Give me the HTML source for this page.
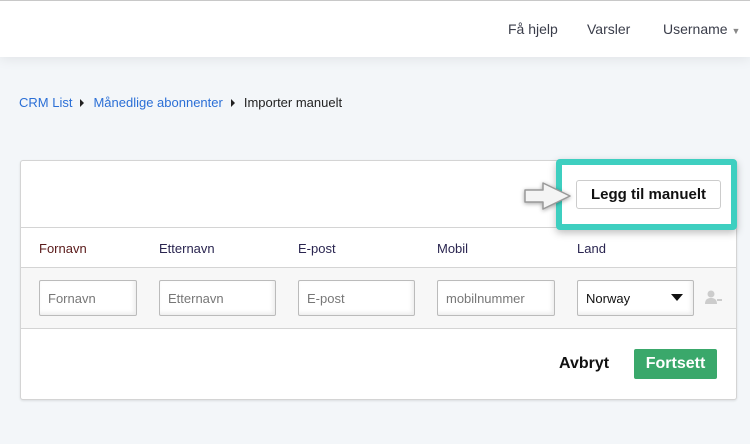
<!DOCTYPE html>
<html><head><meta charset="utf-8"><style>
*{box-sizing:border-box;margin:0;padding:0}
body{width:750px;height:444px;background:#f3f6f9;font-family:"Liberation Sans",sans-serif;position:relative;overflow:hidden}
.top{position:absolute;left:0;top:0;width:750px;height:57px;background:#fff;border-top:1px solid #c8c8c8;box-shadow:0 2px 12px rgba(0,0,0,.08)}
.nav{position:absolute;top:21px;font-size:14px;color:#3a3d4a}
.bc{position:absolute;top:95px;left:19px;font-size:13px;color:#2b6fd6}
.bc span.t{color:#222}
.tri{display:inline-block;width:0;height:0;border-left:4px solid #222;border-top:4px solid transparent;border-bottom:4px solid transparent;margin:0 9px 0 8px}
.card{position:absolute;left:20px;top:160px;width:717px;height:240px;background:#fff;border:1px solid #d4d4d4;border-radius:3px;box-shadow:0 1px 2px rgba(0,0,0,.1)}
.hr{position:absolute;left:0;width:715px;border-top:1px solid #d4d4d4}
.row{position:absolute;left:0;top:107px;width:715px;height:61px;background:#f7f7f7}
.lbl{position:absolute;top:80px;font-size:13px;color:#2a2550}
.inp{position:absolute;top:119px;height:36px;border:1px solid #bbb;border-radius:2px;background:#fff;box-shadow:inset -2px -2px 4px rgba(0,0,0,.08);font-size:13px;color:#777;padding:10px 8px}
.hl{position:absolute;left:556px;top:159px;width:181px;height:71px;border:6px solid #3ecfc0;border-radius:4px;background:#fff;box-shadow:0 3px 8px rgba(0,0,0,.25)}
.btn{position:absolute;left:576px;top:180px;width:145px;height:29px;border:1px solid #ccc;border-radius:3px;background:#fff;font-weight:bold;font-size:15px;text-align:center;line-height:27px;color:#111}
</style></head><body>
<div class="top"></div>
<div class="nav" style="left:508px">Få hjelp</div>
<div class="nav" style="left:587px">Varsler</div>
<div class="nav" style="left:663px">Username <span style="font-size:9px;color:#888">▼</span></div>
<div class="bc">CRM List<span class="tri"></span>Månedlige abonnenter<span class="tri"></span><span class="t">Importer manuelt</span></div>
<div class="card">
 <div class="hr" style="top:66px"></div>
 <div class="row"></div>
 <div class="hr" style="top:106px"></div>
 <div class="hr" style="top:167px"></div>
 <div class="lbl" style="left:18px;color:#5a1a1a">Fornavn</div>
 <div class="lbl" style="left:138px">Etternavn</div>
 <div class="lbl" style="left:277px">E-post</div>
 <div class="lbl" style="left:416px">Mobil</div>
 <div class="lbl" style="left:556px">Land</div>
 <div class="inp" style="left:18px;width:98px">Fornavn</div>
 <div class="inp" style="left:138px;width:117px">Etternavn</div>
 <div class="inp" style="left:277px;width:117px">E-post</div>
 <div class="inp" style="left:416px;width:118px">mobilnummer</div>
 <div class="inp" style="left:556px;width:117px;color:#111">Norway<span style="position:absolute;right:10px;top:13px;border-top:7px solid #111;border-left:6px solid transparent;border-right:6px solid transparent"></span></div>
 <svg style="position:absolute;left:684px;top:129px" width="18" height="16"><circle cx="6" cy="4" r="3.5" fill="#ccc"/><path d="M0 14c0-5 3-6 6-6s6 1 6 6z" fill="#ccc"/><rect x="12" y="9" width="5" height="2" fill="#ccc"/></svg>
 <div style="position:absolute;left:538px;top:194px;font-weight:bold;font-size:16px;color:#111">Avbryt</div>
 <div style="position:absolute;left:613px;top:188px;width:83px;height:30px;background:#3aa86b;border-radius:2px;color:#fff;font-weight:bold;font-size:16px;text-align:center;line-height:30px">Fortsett</div>
</div>
<div class="hl"></div>
<div class="btn">Legg til manuelt</div>
<svg style="position:absolute;left:522px;top:180px;filter:drop-shadow(0 1px 2px rgba(0,0,0,.35))" width="52" height="32"><path d="M3 10h18V3l27 13-27 13v-7H3z" fill="#f4f4f4" stroke="#999" stroke-width="1.5" stroke-linejoin="round"/></svg>
</body></html>
